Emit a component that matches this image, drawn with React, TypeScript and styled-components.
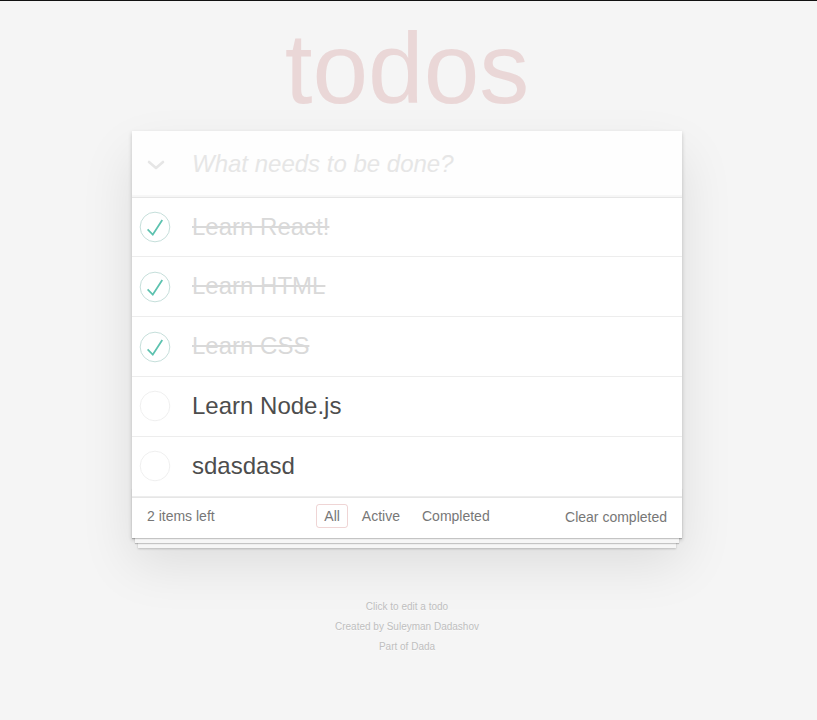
import React from "react";
import styled, { createGlobalStyle } from "styled-components";

const GlobalStyle = createGlobalStyle`
  html, body { margin: 0; padding: 0; }
  body {
    border-top: 1px solid #111;
    padding-right: 3px;
    background: #f5f5f5;
    color: #4d4d4d;
    font: 14px "Liberation Sans", Arial, Helvetica, sans-serif;
    line-height: 1.4em;
    font-weight: 300;
    -webkit-font-smoothing: antialiased;
  }
  * { box-sizing: content-box; }
`;

const Page = styled.div`
  max-width: 550px;
  min-width: 230px;
  margin: 0 auto;
`;

const Title = styled.h1`
  margin: 0;
  height: 125px;
  padding-top: 5px;
  font-size: 100px;
  line-height: 125px;
  font-weight: 100;
  text-align: center;
  color: rgba(175, 47, 47, 0.15);
  text-rendering: optimizeLegibility;
`;

const AppCard = styled.section`
  background: #fff;
  margin: 0 0 40px 0;
  box-shadow: 0 2px 4px 0 rgba(0, 0, 0, 0.2), 0 25px 50px 0 rgba(0, 0, 0, 0.1);
`;

const NewTodoRow = styled.header`
  display: flex;
  align-items: center;
  background: rgba(0, 0, 0, 0.003);
  box-shadow: inset 0 -2px 1px rgba(0, 0, 0, 0.03);
`;

const ToggleAll = styled.div`
  width: 60px;
  height: 65px;
  display: flex;
  align-items: center;
  justify-content: center;
  padding-right: 12px;
  padding-top: 3px;
  box-sizing: border-box;
`;

const NewTodo = styled.input`
  flex: 1;
  min-width: 0;
  border: none;
  outline: none;
  margin: 0;
  padding: 16px 16px 16px 0;
  background: transparent;
  font-family: inherit;
  font-size: 24px;
  line-height: 1.4em;
  height: 33.6px;
  color: inherit;
  &::placeholder {
    font-style: italic;
    font-weight: 300;
    color: #e6e6e6;
  }
`;

const List = styled.ul`
  margin: 0;
  padding: 0;
  list-style: none;
  border-top: 1px solid #e6e6e6;
`;

const Item = styled.li`
  display: flex;
  align-items: center;
  font-size: 24px;
  border-bottom: 1px solid #ededed;
`;

const ToggleCell = styled.div`
  width: 60px;
  flex: none;
  display: flex;
  align-items: center;
  padding-left: 7px;
  box-sizing: border-box;
`;

const Label = styled.label<{ $done: boolean }>`
  flex: 1;
  padding: 15px 15px 15px 0;
  line-height: 1.2;
  word-break: break-all;
  color: ${(p) => (p.$done ? "#d9d9d9" : "#4d4d4d")};
  text-decoration: ${(p) => (p.$done ? "line-through" : "none")};
`;

const Footer = styled.footer`
  position: relative;
  display: grid;
  grid-template-columns: 1fr auto 1fr;
  align-items: center;
  color: #777;
  padding: 8px 15px 12px;
  height: 20px;
  border-top: 1px solid #e6e6e6;
  &::before {
    content: "";
    position: absolute;
    right: 0;
    bottom: 0;
    left: 0;
    height: 50px;
    overflow: hidden;
    pointer-events: none;
    box-shadow: 0 1px 1px rgba(0, 0, 0, 0.2), 0 8px 0 -3px #f6f6f6,
      0 9px 1px -3px rgba(0, 0, 0, 0.2), 0 16px 0 -6px #f6f6f6,
      0 17px 2px -6px rgba(0, 0, 0, 0.2);
  }
`;

const Count = styled.span`
  text-align: left;
  line-height: 20px;
`;

const Filters = styled.ul`
  margin: 0;
  padding: 0;
  list-style: none;
  line-height: 20px;
`;

const FilterItem = styled.li`
  display: inline;
`;

const FilterLink = styled.a<{ $selected?: boolean }>`
  color: inherit;
  margin: 3px;
  padding: 3px 7px;
  text-decoration: none;
  border: 1px solid transparent;
  border-radius: 3px;
  border-color: ${(p) => (p.$selected ? "rgba(175, 47, 47, 0.2)" : "transparent")};
`;

const ClearButton = styled.button`
  justify-self: end;
  margin: 0;
  padding: 0;
  border: 0;
  background: none;
  font: inherit;
  font-size: 14px;
  line-height: 20px;
  color: inherit;
  position: relative;
  top: 1px;
  cursor: pointer;
`;

const Info = styled.footer`
  margin: 64px auto 0;
  color: #bfbfbf;
  font-size: 10px;
  text-shadow: 0 1px 0 rgba(255, 255, 255, 0.5);
  text-align: center;
  p {
    line-height: 1;
    margin: 10px 0;
  }
`;

const Check = ({ done }: { done: boolean }) => (
  <svg width="32" height="32" viewBox="-4 -4 108 108">
    <circle
      cx="50"
      cy="50"
      r="50"
      fill="none"
      stroke={done ? "#bddad5" : "#ededed"}
      strokeWidth="3"
    />
    {done && <path fill="#5dc2af" d="M72 25L42 71 27 56l-4 4 20 20 34-52z" />}
  </svg>
);

const Chevron = () => (
  <svg width="18" height="10" viewBox="0 0 18 10">
    <polyline
      points="2,2 9,8 16,2"
      fill="none"
      stroke="#e6e6e6"
      strokeWidth="2.6"
      strokeLinecap="round"
      strokeLinejoin="round"
    />
  </svg>
);

const todos = [
  { title: "Learn React!", done: true },
  { title: "Learn HTML", done: true },
  { title: "Learn CSS", done: true },
  { title: "Learn Node.js", done: false },
  { title: "sdasdasd", done: false },
];

export default function App() {
  return (
    <>
      <GlobalStyle />
      <Page>
        <Title>todos</Title>
        <AppCard>
          <NewTodoRow>
            <ToggleAll>
              <Chevron />
            </ToggleAll>
            <NewTodo placeholder="What needs to be done?" />
          </NewTodoRow>
          <List>
            {todos.map((t) => (
              <Item key={t.title}>
                <ToggleCell>
                  <Check done={t.done} />
                </ToggleCell>
                <Label $done={t.done}>{t.title}</Label>
              </Item>
            ))}
          </List>
          <Footer>
            <Count>2 items left</Count>
            <Filters>
              <FilterItem>
                <FilterLink href="#/" $selected>All</FilterLink>
              </FilterItem>
              <FilterItem>
                <FilterLink href="#/active">Active</FilterLink>
              </FilterItem>
              <FilterItem>
                <FilterLink href="#/completed">Completed</FilterLink>
              </FilterItem>
            </Filters>
            <ClearButton>Clear completed</ClearButton>
          </Footer>
        </AppCard>
        <Info>
          <p>Click to edit a todo</p>
          <p>Created by Suleyman Dadashov</p>
          <p>Part of Dada</p>
        </Info>
      </Page>
    </>
  );
}
